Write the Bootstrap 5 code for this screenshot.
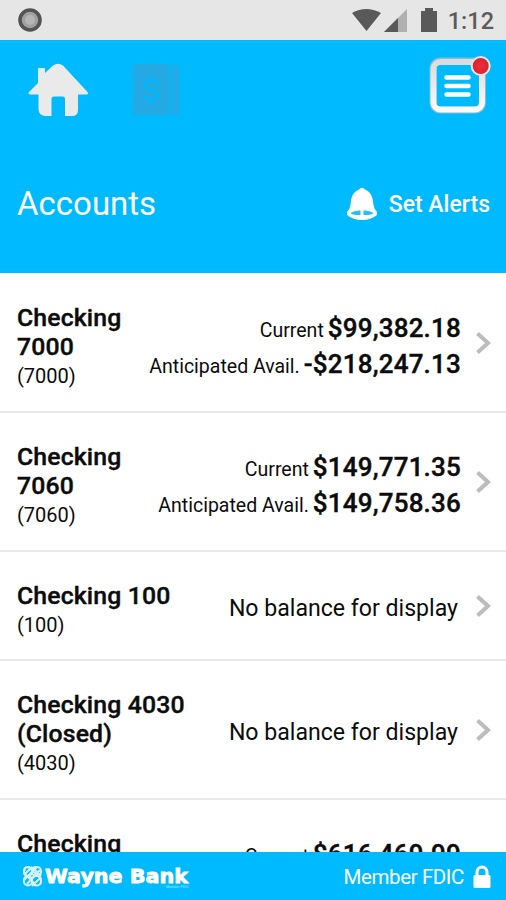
<!DOCTYPE html>
<html lang="en">
<head>
<meta charset="utf-8">
<meta name="viewport" content="width=device-width, initial-scale=1">
<title>Accounts</title>
<link href="https://cdn.jsdelivr.net/npm/bootstrap@5.3.0/dist/css/bootstrap.min.css" rel="stylesheet">
<style>
body{font-family:Roboto,"Liberation Sans",sans-serif;color:#0c0c0c;height:900px;overflow:hidden;background:#fff}
svg{display:block;flex:none}
.sky{background:#00baff;color:#fff}
.status{height:40px;background:#e6e6e6;color:#5b5b5b;padding:0 12px 0 18px;font-size:23.5px;font-weight:500}
.clock{letter-spacing:0;margin-left:7px;line-height:42px;padding-top:2px}
.tools{height:93px;padding:14px 13px 0 28px}
.check-icon{margin-left:43px}
.titlebar{height:140px;padding:2px 16px 0 17px}
.titlebar h1{font-size:33px;font-weight:400;line-height:34px;margin:0}
.alerts{font-size:23px;font-weight:500;line-height:32px;gap:11px}
.alerts span{padding-top:1px}
.accounts{height:579px;overflow:hidden;padding-top:1px}
.acct{height:139px;padding:29px 14px 0 17px;border-bottom:2px solid #e8e8e8}
.acct.short{height:109px}
.acct-name,.sums b{font-weight:500;-webkit-text-stroke:.4px #0c0c0c}
.acct-name{font-size:24.8px;letter-spacing:.15px;line-height:29px;white-space:pre-line}
.acct-no{font-size:20px;line-height:31px}
.sums{padding-top:10px;white-space:nowrap}
.sum-line{height:36px;line-height:36px}
.kind{font-size:19.5px}
.sums b{font-size:26px;letter-spacing:.2px;line-height:1}
.none{font-size:23.1px;padding-right:3px;padding-bottom:21px}
.chev{margin-left:15px;margin-bottom:29px}
.foot{height:48px;padding:1px 15px 0 23px}
.brand{font-family:"DejaVu Sans","Liberation Sans",sans-serif;font-weight:700;font-size:20px}
.tag{font-family:"Liberation Sans",sans-serif;font-weight:400;font-size:4px}
.fdic{font-size:20.5px;letter-spacing:-.4px;line-height:28px;gap:9px}
</style>
<script src="https://cdn.jsdelivr.net/npm/bootstrap@5.3.0/dist/js/bootstrap.bundle.min.js"></script>
</head>
<body class="d-flex flex-column">
<svg width="0" height="0" class="position-absolute"><defs>
  <symbol id="chev" viewBox="0 0 16 24"><path d="M1.500 2.500L12 12L1.500 21.500" fill="none" stroke="#bcbcbc" stroke-width="4"/></symbol>
</defs></svg>
<div class="status d-flex align-items-center">
  <svg width="24" height="24" viewBox="0 0 24 24"><circle cx="12" cy="12" r="10" fill="#a0a0a0" stroke="#535353" stroke-width="3.6"/><circle cx="12" cy="12" r="5" fill="#b5b5b5"/></svg>
  <div class="d-flex align-items-center ms-auto">
    <svg width="90" height="28" viewBox="0 0 90 28"><path d="M1 7Q15-1 30 7L15.500 25Z" fill="#595959"/><path d="M56 3V26H33Z" fill="#b0b0b0"/><path d="M47 12V26H33Z" fill="#595959"/><path d="M70 5H74V2H82V5H86V26H70Z" fill="#595959"/></svg>
    <span class="clock">1:12</span>
  </div>
</div>
<header class="sky">
  <div class="tools d-flex align-items-start">
    <svg width="60" height="64" viewBox="28 54 60 64"><path d="M38 80V69Q38 68 39 68H44Q45 68 45 69V73L53 65.500Q58 62 63 65.500L87.500 92Q89 94.500 86 94.500H78V110Q78 116 72 116H65V99Q65 96.500 62.500 96.500H54Q51.500 96.500 51.500 99V116H45Q38.500 115 38.500 109V94.500H30.500Q27.500 94.500 29 92L38 83Z" fill="#eaeaea"/></svg>
    <svg class="check-icon" width="50" height="64" viewBox="131 54 50 64"><rect x="133" y="64" width="36" height="51" rx="4" fill="#24a9e2"/><path d="M170 65Q180 64 180 68V112Q180 116 170 115Z" fill="#17aff0"/><path d="M172 66V114M177 67V113" stroke="#28a8e0" stroke-width="1.500"/><path d="M158.500 85Q157 80 152 80Q145.500 81 145.500 86C145.500 91 159 89 158 95Q156 100 151 100Q146 100 144.500 96M151.500 75V80M150.500 100V105" fill="none" stroke="#04b7fa" stroke-width="3"/></svg>
    <svg class="ms-auto" width="64" height="64" viewBox="429 54 64 64"><defs><linearGradient id="frame" x2="0" y2="1"><stop stop-color="#dcdcdc"/><stop offset="1" stop-color="#fafafa"/></linearGradient><radialGradient id="dot"><stop stop-color="#e8323d"/><stop offset="1" stop-color="#dc1f2d"/></radialGradient></defs><rect x="433" y="61" width="49.500" height="49" rx="7" fill="none" stroke="#86bcd1" stroke-width="7"/><rect x="433.500" y="62" width="48.500" height="47.500" rx="7" fill="none" stroke="url(#frame)" stroke-width="6"/><path d="M446.500 77.500H468.500M446.500 86H468.500M446.500 94.500H468.500" stroke="#fff" stroke-width="4.600" stroke-linecap="round"/><circle cx="480.700" cy="66" r="9" fill="url(#dot)" stroke="#e8e4e4" stroke-width="2"/></svg>
  </div>
  <div class="titlebar d-flex align-items-center justify-content-between">
    <h1>Accounts</h1>
    <div class="alerts d-flex align-items-center">
      <svg width="32" height="34" viewBox="0 0 32 34"><path d="M13 2.500Q16-1 19 2.500C26 5 27 12 27.500 18Q28 22 31 25V28Q25 33 16 33T1 28V25Q4 22 4.500 18C5 12 6 5 13 2.500Z" fill="#fff"/><path d="M4.500 26Q9 23 14.500 23.500V28Q7 28.500 4.500 26ZM27.500 26Q23 23 17.500 23.500V28Q25 28.500 27.500 26Z" fill="#22bff9"/></svg>
      <span>Set Alerts</span>
    </div>
  </div>
</header>
<main class="accounts">
  <div class="acct d-flex">
    <div><div class="acct-name">Checking
7000</div><div class="acct-no">(7000)</div></div>
    <div class="sums ms-auto text-end"><div class="sum-line"><span class="kind">Current</span> <b>$99,382.18</b></div><div class="sum-line"><span class="kind">Anticipated Avail.</span> <b>-$218,247.13</b></div></div>
    <svg class="chev align-self-center" width="16" height="24"><use href="#chev"/></svg>
  </div>
  <div class="acct d-flex">
    <div><div class="acct-name">Checking
7060</div><div class="acct-no">(7060)</div></div>
    <div class="sums ms-auto text-end"><div class="sum-line"><span class="kind">Current</span> <b>$149,771.35</b></div><div class="sum-line"><span class="kind">Anticipated Avail.</span> <b>$149,758.36</b></div></div>
    <svg class="chev align-self-center" width="16" height="24"><use href="#chev"/></svg>
  </div>
  <div class="acct short d-flex">
    <div><div class="acct-name">Checking 100</div><div class="acct-no">(100)</div></div>
    <div class="none ms-auto align-self-center">No balance for display</div>
    <svg class="chev align-self-center" width="16" height="24"><use href="#chev"/></svg>
  </div>
  <div class="acct d-flex">
    <div><div class="acct-name">Checking 4030
(Closed)</div><div class="acct-no">(4030)</div></div>
    <div class="none ms-auto align-self-center">No balance for display</div>
    <svg class="chev align-self-center" width="16" height="24"><use href="#chev"/></svg>
  </div>
  <div class="acct d-flex">
    <div><div class="acct-name">Checking</div></div>
    <div class="sums ms-auto text-end"><div class="sum-line"><span class="kind">Current</span> <b>$616,469.99</b></div></div>
    <svg class="chev invisible" width="16" height="24"></svg>
  </div>
</main>
<footer class="foot sky d-flex align-items-center justify-content-between">
  <svg width="168" height="30" viewBox="24 862 168 30" role="img" aria-label="Wayne Bank">
    <g fill="none" stroke="#d5f3ff" stroke-width="2"><path d="M25 875L33 867M25 880L38 867M28 884L41 870M33 886L42 877M26 871Q24 867 30 867L41 878Q43 882 41 884M25 873L37 885M33 867L42 876"/><rect x="25" y="867" width="8" height="9" rx="4"/><rect x="33" y="867" width="9" height="9" rx="4"/><rect x="25" y="876" width="8" height="9.500" rx="4"/><rect x="33" y="876" width="9" height="9.500" rx="4"/></g>
    <text class="brand" x="46" y="883" textLength="143" lengthAdjust="spacingAndGlyphs" fill="#fff" stroke="#fff" stroke-width=".8">Wayne Bank</text>
    <text class="tag" x="167" y="888" textLength="23" lengthAdjust="spacingAndGlyphs" fill="#b5eaff">Member FDIC</text>
  </svg>
  <div class="fdic d-flex align-items-center"><span>Member FDIC</span>
    <svg width="18" height="24" viewBox="0 0 18 24"><path d="M4 11V7.500A5 5.500 0 0 1 14 7.500V11" fill="none" stroke="#fff" stroke-width="3"/><rect x=".5" y="10" width="17" height="13" rx="1.500" fill="#fff"/></svg>
  </div>
</footer>
</body>
</html>
